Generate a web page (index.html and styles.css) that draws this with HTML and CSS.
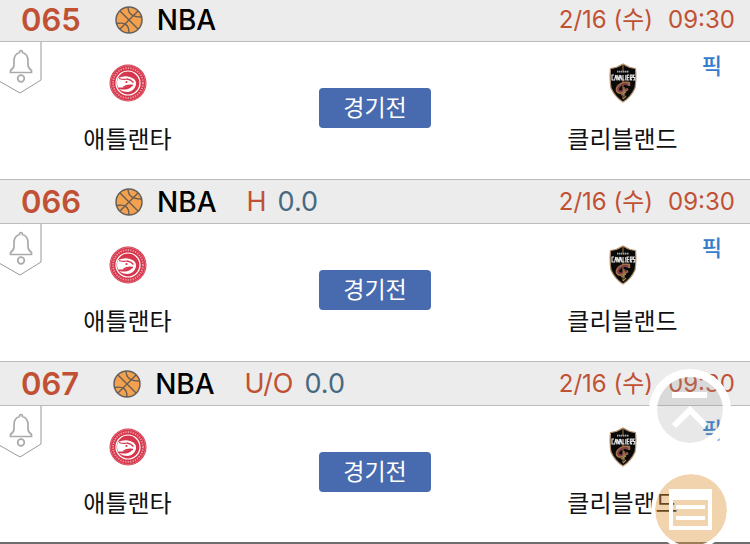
FILE: index.html
```html
<!DOCTYPE html>
<html lang="ko">
<head>
<meta charset="UTF-8">
<meta name="viewport" content="width=device-width, initial-scale=1.0">
<title>NBA</title>
<link rel="stylesheet" href="styles.css">
</head>
<body>

<!-- Shared icons -->
<svg class="sprite" aria-hidden="true">
    <symbol id="ball" viewBox="0 0 28 28">
        <circle cx="14" cy="14" r="13" fill="#f2a14e" stroke="#66605c" stroke-width="1.5"/>
        <path d="M5 5L23 23M23 5L5 23M13 1Q13 11 26 11M2 17.500Q14 15 14 27" fill="none" stroke="#655b52" stroke-width="1.3"/>
    </symbol>
    <symbol id="bell" viewBox="0 0 43 53">
        <path d="M-1 39L20 51L41 38V-1" fill="#fff" stroke="#999" stroke-width="1"/>
        <path d="M21 8.500Q22.500 8.500 22.500 10.500Q28 12 28 19V23Q28 26 31.500 28.500V30.500H10.500V28.500Q14 26 14 23V19Q14 12 19.500 10.500Q19.500 8.500 21 8.500Z" fill="#fff" stroke="#aaa" stroke-width="1.700"/>
        <circle cx="21" cy="36.500" r="3.300" fill="#fff" stroke="#aaa" stroke-width="1.700"/>
    </symbol>
    <symbol id="hawks" viewBox="0 0 38 38">
        <circle cx="19" cy="19" r="18.500" fill="#d6364b"/>
        <circle cx="19" cy="19" r="17.500" fill="none" stroke="#e06c7b" stroke-width="1"/>
        <circle cx="19" cy="19" r="15" fill="none" stroke="#eb9ba5" stroke-width="1.800" stroke-dasharray="1.300 1.200"/>
        <circle cx="19" cy="19" r="12" fill="#d6364b" stroke="#fff" stroke-width="1.200"/>
        <path d="M9 14Q16 11 21 13Q28 15 27 21Q25 27 19 28Q13 28 10 25Q15 26 19 25Q22 24 23 22Q19 21 15 23.500H9Q7 18 9 14Z" fill="#fff"/>
        <path d="M10 14.500Q15 16 18 15Q22 15.500 24.500 18.500M24 21.500Q18 20.500 14 23.500" fill="none" stroke="#d6364b" stroke-width="1.300"/>
        <circle cx="17.500" cy="18" r="1.100" fill="#d6364b"/>
    </symbol>
    <symbol id="cavs" viewBox="0 0 28 40">
        <path d="M14 1Q20 5 26.500 5.500Q27.500 16 26 25Q22 34 14 39Q6 34 2 25Q.5 16 1.500 5.500Q8 5 14 1Z" fill="#090909" stroke="#b4906d" stroke-width="1.200"/>
        <path d="M14 2V8M14 17V36" stroke="#806034" stroke-width="1.300"/>
        <path d="M8 8.700H20" stroke="#aaa" stroke-width="1.800" stroke-dasharray="1.500 .5"/>
        <path d="M5 12H3V17H5M5.500 17.500L6.800 12L8 17.500M8 12L9.300 17L10.500 12M10.500 17.500L11.800 12L13 17.500M14 12V17H15.500M16.800 12V17.500M20 12H18.300V17H20M18.300 14.500H20M21.300 17.500V12H23V14.500H21.300L23 17.500M25.800 12H24.300V14.500H25.800V17H24" fill="none" stroke="#e5e5e5" stroke-width="1.1"/>
        <path d="M20 23V20Q16 19 12 21Q7 24 8 28Q10 31 14 29L19 26" fill="none" stroke="#a07046" stroke-width="2.400"/>
        <path d="M19 22Q16 20 12.500 22Q9 24 9 27Q10 29 13 28L18 25.500" fill="none" stroke="#813c48" stroke-width="1.800"/>
        <path d="M15 24V33M12 32L17 29M14 36L17 33" fill="none" stroke="#a18452" stroke-width="1.300"/>
    </symbol>
</svg>

<main class="games">
    <section class="game">
        <header class="game-head">
            <span class="game-no">065</span>
            <svg class="ball"><use href="#ball"/></svg>
            <span class="league">NBA</span>
            <span class="date"><span>2/16 (수)</span><time>09:30</time></span>
        </header>
        <div class="game-body">
            <button class="alarm" aria-label="알림"><svg><use href="#bell"/></svg></button>
            <div class="team">
                <svg class="hawks"><use href="#hawks"/></svg>
                <span>애틀랜타</span>
            </div>
            <div class="state"><span>경기전</span></div>
            <div class="team">
                <svg class="cavs"><use href="#cavs"/></svg>
                <span>클리블랜드</span>
            </div>
            <a class="pick" href="#">픽</a>
        </div>
    </section>

    <section class="game">
        <header class="game-head">
            <span class="game-no">066</span>
            <svg class="ball"><use href="#ball"/></svg>
            <span class="league">NBA</span>
            <span class="type">H</span>
            <span class="line">0.0</span>
            <span class="date"><span>2/16 (수)</span><time>09:30</time></span>
        </header>
        <div class="game-body">
            <button class="alarm" aria-label="알림"><svg><use href="#bell"/></svg></button>
            <div class="team">
                <svg class="hawks"><use href="#hawks"/></svg>
                <span>애틀랜타</span>
            </div>
            <div class="state"><span>경기전</span></div>
            <div class="team">
                <svg class="cavs"><use href="#cavs"/></svg>
                <span>클리블랜드</span>
            </div>
            <a class="pick" href="#">픽</a>
        </div>
    </section>

    <section class="game">
        <header class="game-head">
            <span class="game-no">067</span>
            <svg class="ball"><use href="#ball"/></svg>
            <span class="league">NBA</span>
            <span class="type">U/O</span>
            <span class="line">0.0</span>
            <span class="date"><span>2/16 (수)</span><time>09:30</time></span>
        </header>
        <div class="game-body">
            <button class="alarm" aria-label="알림"><svg><use href="#bell"/></svg></button>
            <div class="team">
                <svg class="hawks"><use href="#hawks"/></svg>
                <span>애틀랜타</span>
            </div>
            <div class="state"><span>경기전</span></div>
            <div class="team">
                <svg class="cavs"><use href="#cavs"/></svg>
                <span>클리블랜드</span>
            </div>
            <a class="pick" href="#">픽</a>
        </div>
    </section>
</main>

<!-- Floating buttons -->
<div class="floating">
    <button class="round top" aria-label="맨 위로">
        <svg viewBox="0 0 66 66"><path d="M15 18H50M17 49L33 33L49 49" fill="none" stroke="#fff" stroke-width="6"/></svg>
    </button>
    <button class="round slip" aria-label="목록">
        <svg viewBox="0 0 72 72"><path d="M16 17H55V54H16Z" fill="none" stroke="#fff" stroke-width="4"/><path d="M16 21H55" stroke="#fff" stroke-width="10"/><path d="M21 33H50M21 44H50" stroke="#fff" stroke-width="4"/></svg>
    </button>
</div>

</body>
</html>
```
FILE: styles.css
```css
* {
    margin: 0;
    padding: 0;
    box-sizing: border-box;
}

body {
    font-family: Inter, "Noto Sans CJK KR", sans-serif;
    font-size: 24px;
    color: #111;
    background: #fff;
    overflow: hidden;
}

button {
    border: none;
    background: none;
    cursor: pointer;
}

svg {
    display: block;
}

.sprite {
    position: absolute;
    width: 0;
    height: 0;
}

/* The list starts scrolled under the top edge */
.games {
    margin-top: -3px;
}

/* Game header */
.game-head {
    display: flex;
    align-items: center;
    height: 45px;
    padding: 0 15px 0 21px;
    background: #ececec;
    border-top: 1px solid #bbb;
    border-bottom: 1px solid #bbb;
    line-height: 32px;
    color: #c15134;
}

.game-no {
    font-size: 31px;
    font-weight: 600;
}

.ball {
    width: 28px;
    height: 28px;
    margin: 0 14px 0 34px;
}

.league {
    font-size: 28px;
    font-weight: 500;
    color: #000;
}

.type {
    margin-left: 30px;
    font-size: 27px;
}

.line {
    margin-left: 11px;
    font-size: 27px;
    color: #456980;
}

.date {
    display: flex;
    gap: 15px;
    margin-left: auto;
}

/* Game body */
.game-body {
    position: relative;
    display: grid;
    grid-template-columns: 34% 32% 34%;
    height: 137px;
}

.game:last-child .game-body {
    height: 138px;
    border-bottom: 2px solid #6f6c6d;
}

.alarm {
    position: absolute;
    left: 0;
    top: 0;
}

.alarm svg {
    width: 43px;
    height: 53px;
}

.team {
    display: flex;
    flex-direction: column;
    align-items: center;
    padding-top: 21px;
    line-height: 36px;
}

.team svg {
    height: 40px;
    margin-bottom: 19px;
}

.hawks {
    width: 38px;
}

.cavs {
    width: 28px;
}

.state {
    padding-top: 46px;
    text-align: center;
}

.state span {
    display: inline-block;
    width: 112px;
    border-radius: 4px;
    background: #486aaf;
    color: #fff;
    font-size: 23px;
    line-height: 40px;
}

.pick {
    position: absolute;
    right: 28px;
    top: 6px;
    color: #347dcc;
    font-size: 22px;
    font-weight: 500;
    line-height: 36px;
    text-decoration: none;
}

/* Floating buttons */
.floating {
    position: fixed;
    right: 19px;
    top: 369px;
    display: flex;
    flex-direction: column;
    align-items: flex-end;
    gap: 19px;
}

.round {
    border-radius: 50%;
    background-clip: padding-box;
}

.round svg {
    width: 100%;
    height: 100%;
}

.top {
    width: 82px;
    height: 82px;
    border: 8px solid #fff;
    background-color: rgba(150, 150, 150, 0.22);
}

.slip {
    width: 80px;
    height: 80px;
    border: 4px solid #fff;
    background-color: rgba(222, 151, 62, 0.42);
}
```
